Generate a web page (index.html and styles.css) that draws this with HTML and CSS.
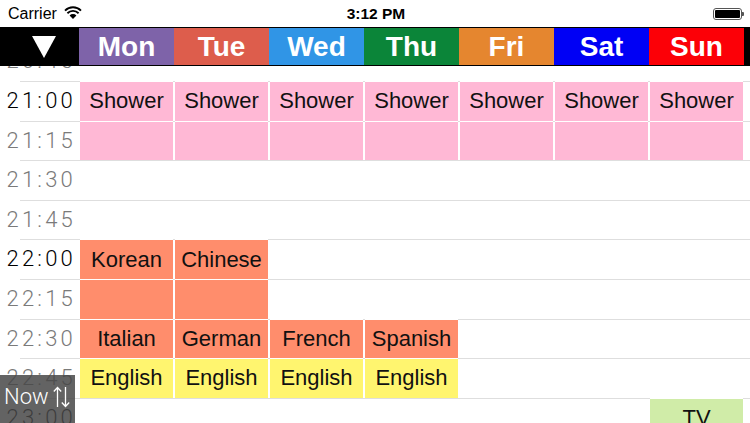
FILE: index.html
```html
<!DOCTYPE html>
<html>
<head>
<meta charset="utf-8">
<link rel="stylesheet" href="styles.css">
</head>
<body>
<div class="screen">
  <div class="status">
    <div class="status-left">
      <span class="carrier">Carrier</span>
      <svg class="wifi" width="18" height="14" viewBox="0 0 18 14">
        <path d="M9 13 L5.6 9.4 A4.8 4.8 0 0 1 12.4 9.4 Z" fill="#000"/>
        <path d="M3.4 7.2 A8 8 0 0 1 14.6 7.2" stroke="#000" stroke-width="1.9" fill="none"/>
        <path d="M1 4.6 A11.4 11.4 0 0 1 17 4.6" stroke="#000" stroke-width="1.9" fill="none"/>
      </svg>
    </div>
    <div class="clock">3:12 PM</div>
    <div class="status-right">
      <div class="battery"><div class="battery-fill"></div></div><div class="battery-nub"></div>
    </div>
  </div>

  <div class="timeline">
    <div class="row"><div class="label quarter">20:45</div></div>
    <div class="row"><div class="label hour">21:00</div>
      <div class="slot"><div class="ev pink">Shower</div></div>
      <div class="slot"><div class="ev pink">Shower</div></div>
      <div class="slot"><div class="ev pink">Shower</div></div>
      <div class="slot"><div class="ev pink">Shower</div></div>
      <div class="slot"><div class="ev pink">Shower</div></div>
      <div class="slot"><div class="ev pink">Shower</div></div>
      <div class="slot"><div class="ev pink">Shower</div></div>
    </div>
    <div class="row"><div class="label quarter">21:15</div>
      <div class="slot"><div class="ev pink"></div></div>
      <div class="slot"><div class="ev pink"></div></div>
      <div class="slot"><div class="ev pink"></div></div>
      <div class="slot"><div class="ev pink"></div></div>
      <div class="slot"><div class="ev pink"></div></div>
      <div class="slot"><div class="ev pink"></div></div>
      <div class="slot"><div class="ev pink"></div></div>
    </div>
    <div class="row"><div class="label quarter">21:30</div></div>
    <div class="row"><div class="label quarter">21:45</div></div>
    <div class="row"><div class="label hour">22:00</div>
      <div class="slot"><div class="ev salmon">Korean</div></div>
      <div class="slot"><div class="ev salmon">Chinese</div></div>
    </div>
    <div class="row"><div class="label quarter">22:15</div>
      <div class="slot"><div class="ev salmon"></div></div>
      <div class="slot"><div class="ev salmon"></div></div>
    </div>
    <div class="row"><div class="label quarter">22:30</div>
      <div class="slot"><div class="ev salmon">Italian</div></div>
      <div class="slot"><div class="ev salmon">German</div></div>
      <div class="slot"><div class="ev salmon">French</div></div>
      <div class="slot"><div class="ev salmon">Spanish</div></div>
    </div>
    <div class="row"><div class="label quarter">22:45</div>
      <div class="slot"><div class="ev yellow">English</div></div>
      <div class="slot"><div class="ev yellow">English</div></div>
      <div class="slot"><div class="ev yellow">English</div></div>
      <div class="slot"><div class="ev yellow">English</div></div>
    </div>
    <div class="row"><div class="label hour">23:00</div>
      <div class="slot"></div>
      <div class="slot"></div>
      <div class="slot"></div>
      <div class="slot"></div>
      <div class="slot"></div>
      <div class="slot"></div>
      <div class="slot"><div class="ev green">TV</div></div>
    </div>
  </div>

  <div class="header">
    <div class="corner">
      <svg width="24" height="22" viewBox="0 0 24 22"><path d="M0 0 H24 L12 22 Z" fill="#fff"/></svg>
    </div>
    <div class="day mon">Mon</div>
    <div class="day tue">Tue</div>
    <div class="day wed">Wed</div>
    <div class="day thu">Thu</div>
    <div class="day fri">Fri</div>
    <div class="day sat">Sat</div>
    <div class="day sun">Sun</div>
  </div>

  <div class="now">
    <span>Now</span>
    <svg width="17" height="22" viewBox="0 0 17 22">
      <path d="M4.5 1.5 V21 M0.8 5.5 L4.5 1.5 L8.2 5.5" stroke="#fff" stroke-width="1.3" fill="none"/>
      <path d="M12.5 1 V20.5 M8.8 16.5 L12.5 20.5 L16.2 16.5" stroke="#fff" stroke-width="1.3" fill="none"/>
    </svg>
  </div>
</div>
</body>
</html>
```

FILE: styles.css
```css
html, body {
  margin: 0;
  padding: 0;
  background: #fff;
}
.screen {
  position: relative;
  width: 750px;
  height: 423px;
  overflow: hidden;
  font-family: "Liberation Sans", Arial, sans-serif;
}
.status {
  height: 27px;
  display: flex;
  align-items: center;
  justify-content: space-between;
  padding: 0 6px 0 8px;
  box-sizing: border-box;
}
.status-left {
  display: flex;
  align-items: center;
  gap: 7px;
  width: 200px;
}
.carrier {
  font-size: 16px;
  color: #000;
}
.wifi {
  margin-top: -1px;
}
.clock {
  font-size: 15.5px;
  font-weight: bold;
  color: #000;
}
.status-right {
  width: 200px;
  display: flex;
  justify-content: flex-end;
  align-items: center;
}
.battery {
  width: 29px;
  height: 12px;
  box-sizing: border-box;
  border: 1px solid #555;
  border-radius: 3px;
  padding: 1px;
  margin-top: 1px;
}
.battery-fill {
  width: 100%;
  height: 100%;
  background: #000;
  border-radius: 1px;
}
.battery-nub {
  width: 2px;
  height: 4px;
  background: #555;
  border-radius: 0 1px 1px 0;
  margin-top: 1px;
}

.timeline {
  padding-top: 14.4px;
}
.row {
  height: 39.6px;
  box-sizing: border-box;
  margin-left: 20px;
  border-top: 1px solid #dedede;
  display: flex;
}
.label {
  width: 79px;
  margin-left: -20px;
  flex: none;
  box-sizing: border-box;
  padding-right: 3px;
  text-align: right;
  white-space: nowrap;
  font-family: "Roboto", "Liberation Sans", sans-serif;
  font-weight: 300;
  font-size: 22px;
  letter-spacing: 3.2px;
  line-height: 38.6px;
}
.hour { color: #000; }
.quarter { color: #7a7a7a; }
.slot {
  width: 95px;
  flex: none;
  height: 100%;
  box-sizing: border-box;
  padding: 0 1px 0 1px;
}
.ev {
  height: 39.6px;
  margin-top: -1px;
  box-sizing: border-box;
  border-top: 1px solid #fff;
  display: flex;
  align-items: center;
  justify-content: center;
  font-size: 22px;
  color: #111;
}
.pink { background: #ffb8d5; }
.salmon { background: #ff8d6c; }
.yellow { background: #fff56f; }
.green { background: #d0eca8; }

.header {
  position: absolute;
  top: 27px;
  left: 0;
  width: 750px;
  height: 39px;
  box-sizing: border-box;
  padding: 1px 6px 1px 0;
  background: #000;
  display: flex;
}
.corner {
  width: 79px;
  display: flex;
  align-items: center;
  justify-content: center;
  padding-left: 8px;
  box-sizing: border-box;
}
.corner svg {
  margin-top: 1px;
}
.day {
  width: 95px;
  display: flex;
  align-items: center;
  justify-content: center;
  color: #fff;
  font-weight: bold;
  font-size: 28px;
}
.mon { background: #7e63a9; }
.tue { background: #dd5d4c; }
.wed { background: #3095e6; }
.thu { background: #0b8539; }
.fri { background: #e5862f; }
.sat { background: #0000f5; }
.sun { background: #fc0007; }

.now {
  position: absolute;
  left: 0;
  top: 375px;
  width: 75px;
  height: 48px;
  background: rgba(72, 72, 72, 0.85);
  display: flex;
  align-items: flex-start;
  padding: 10px 0 0 4px;
  box-sizing: border-box;
  gap: 4px;
}
.now span {
  font-family: "Roboto", "Liberation Sans", sans-serif;
  font-weight: 300;
  font-size: 22px;
  color: #fff;
  line-height: 24px;
}
.now svg {
  margin-top: 1px;
}
```
